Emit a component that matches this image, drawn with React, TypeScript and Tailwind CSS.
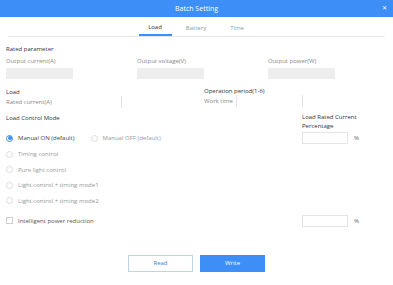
import React, { useState } from "react";

const font = { fontFamily: '"Open Sans", "Noto Sans", sans-serif' };

const Radio: React.FC<{ checked?: boolean; label: string }> = ({ checked, label }) => (
  <label className="flex items-center gap-[5px] h-[8px]">
    <span
      className={
        checked
          ? "w-[7px] h-[7px] rounded-full border border-[#3d8ef6] flex items-center justify-center"
          : "w-[7px] h-[7px] rounded-full border border-[#dcdcdc]"
      }
    >
      {checked && <span className="w-[4px] h-[4px] rounded-full bg-[#3d8ef6]" />}
    </span>
    <span className={checked ? "text-[#444]" : "text-[#999]"}>{label}</span>
  </label>
);

const App: React.FC = () => {
  const [tab] = useState("Load");

  return (
    <div className="w-[393px] h-[285px] bg-white text-[6px] leading-none text-[#555]" style={font}>
      <div className="h-[17px] bg-[#3d8ef6] flex items-center justify-center relative">
        <p className="text-white text-[7px]">Batch Setting</p>
        <span className="absolute right-[6px] top-[5px] text-white text-[6px]">✕</span>
      </div>

      <div className="mx-2 h-[20px] border-b border-[#e8e8e8] flex justify-center gap-[8px] pr-[1px]">
        {["Load", "Battery", "Time"].map((t) => (
          <div
            key={t}
            className={
              t === tab
                ? "w-[33px] pt-[2px] flex items-center justify-center border-b-2 border-[#3d8ef6] text-[#333] text-[6px]"
                : "w-[33px] pt-[2px] flex items-center justify-center text-[#999] text-[6px]"
            }
          >
            {t}
          </div>
        ))}
      </div>

      <div className="px-[6px]">
        <p className="mt-[9px] text-[#333]">Rated parameter</p>
        <div className="mt-[6px] flex">
          {["Output current(A)", "Output voltage(V)", "Output power(W)"].map((l) => (
            <div key={l} className="w-[131px] shrink-0 flex flex-col">
              <span className="text-[#888]">{l}</span>
              <div className="mt-[4px] w-[67px] h-[11px] bg-[#eeeeee]" />
            </div>
          ))}
        </div>

        <div className="mt-[10px] flex">
          <div className="w-[198px]">
            <p className="text-[#333]">Load</p>
            <div className="mt-[1px] flex items-center">
              <span className="w-[49px] text-[#888]">Rated current(A)</span>
              <div className="w-[67px] h-[12px] border-r border-[#e4e4e4]" />
            </div>
          </div>
          <div>
            <p className="text-[#333] mt-[-1px]">Operation period(1-6)</p>
            <div className="mt-[1px] flex items-center">
              <span className="w-[32px] text-[#888]">Work time</span>
              <div className="w-[67px] h-[12px] border-l border-r border-[#e4e4e4]" />
            </div>
          </div>
        </div>

        <div className="mt-[7px] flex">
          <div className="flex-1 flex flex-col">
            <p className="text-[#333]">Load Control Mode</p>
            <div className="mt-[13px] flex gap-[16px]">
              <Radio checked label="Manual ON (default)" />
              <Radio label="Manual OFF (default)" />
            </div>
            <div className="mt-[8px] flex flex-col gap-[7.5px]">
              <Radio label="Timing control" />
              <Radio label="Pure light control" />
              <Radio label="Light control + timing mode1" />
              <Radio label="Light control + timing mode2" />
            </div>
          </div>
          <div className="w-[85px] flex flex-col">
            <p className="text-[#333] mt-[-1px]">Load Rated Current</p>
            <p className="text-[#333] mt-[3px]">Percentage</p>
            <div className="mt-[3px] flex items-center gap-[6px]">
              <div className="w-[46px] h-[12px] border border-[#e4e4e4]" />
              <span className="text-[#666]">%</span>
            </div>
          </div>
        </div>

        <div className="mt-[10px] flex items-center">
          <label className="flex-1 flex items-center gap-[5px]">
            <span className="w-[7px] h-[7px] border border-[#cfcfcf]" />
            <span className="text-[#555]">Intelligent power reduction</span>
          </label>
          <div className="w-[85px] flex items-center gap-[6px] -ml-[1px]">
            <div className="w-[46px] h-[12px] border border-[#e4e4e4]" />
            <span className="text-[#666]">%</span>
          </div>
        </div>

        <div className="mt-[28px] flex justify-center gap-[7px]">
          <button className="w-[65px] h-[17px] border border-[#b8d4f0] text-[#3d7fd0] text-[6px]">Read</button>
          <button className="w-[65px] h-[17px] bg-[#3d8ef6] text-white text-[6px]">Write</button>
        </div>
      </div>
    </div>
  );
};

export default App;
